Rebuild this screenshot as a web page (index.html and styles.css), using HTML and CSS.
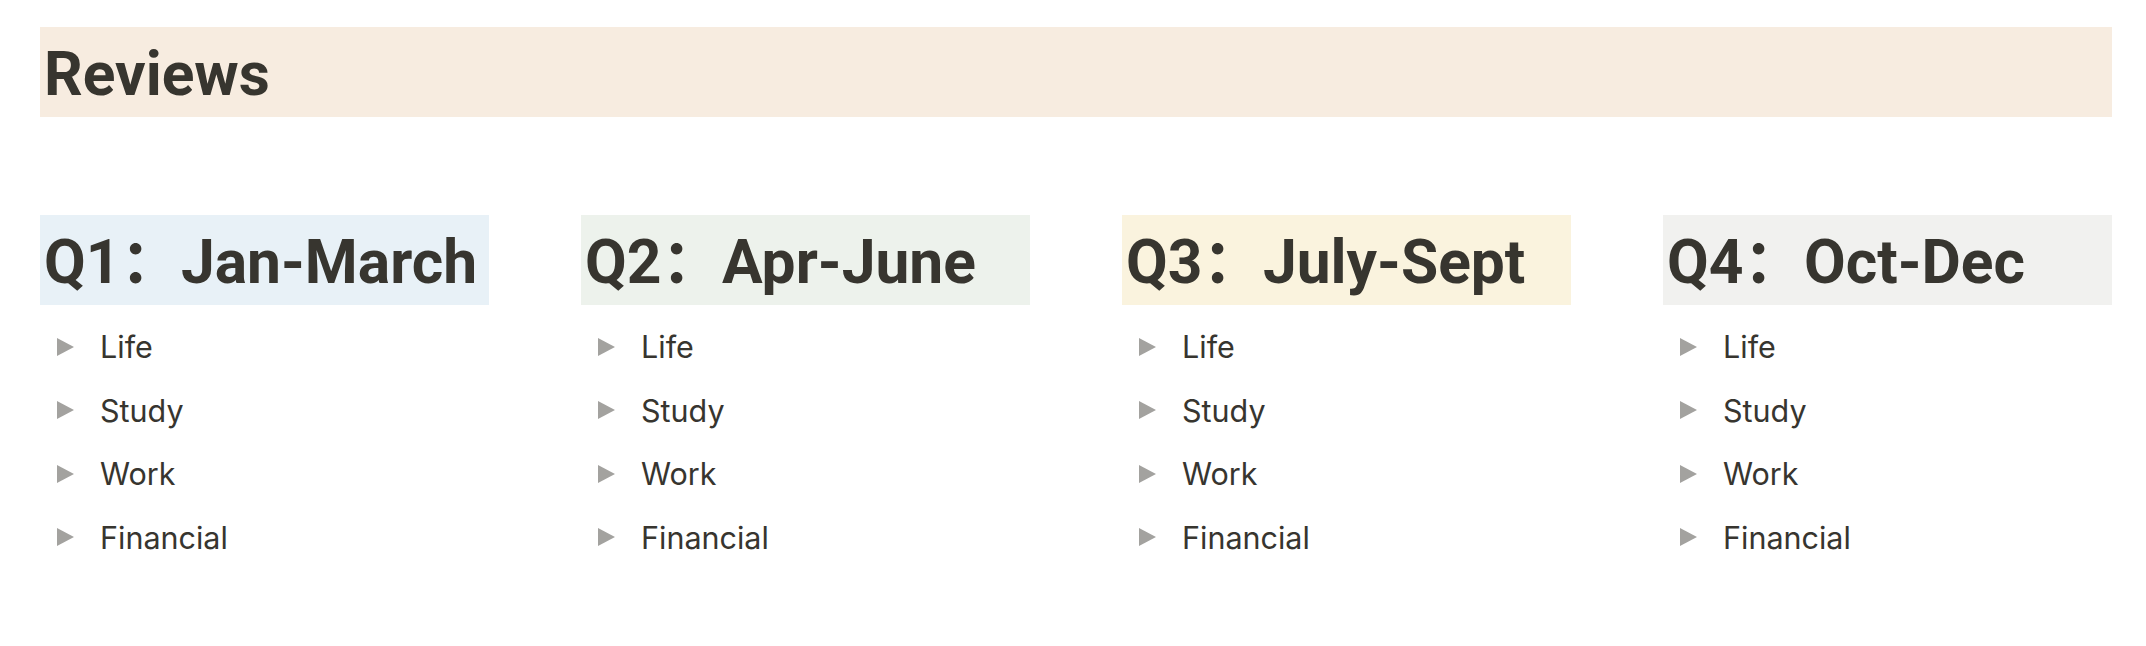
FILE: index.html
```html
<!DOCTYPE html>
<html lang="en">
<head>
<meta charset="utf-8">
<title>Reviews</title>
<link rel="stylesheet" href="styles.css">
</head>
<body>
<div class="page">
  <h1 class="title-bar">Reviews</h1>
  <div class="columns">
    <section class="col">
      <h2 class="quarter quarter-blue">Q1：Jan-March</h2>
      <ul class="toggles">
        <li class="toggle"><svg class="tri" viewBox="0 0 17 18"><polygon points="0,0 17,9 0,18"/></svg><span>Life</span></li>
        <li class="toggle"><svg class="tri" viewBox="0 0 17 18"><polygon points="0,0 17,9 0,18"/></svg><span>Study</span></li>
        <li class="toggle"><svg class="tri" viewBox="0 0 17 18"><polygon points="0,0 17,9 0,18"/></svg><span>Work</span></li>
        <li class="toggle"><svg class="tri" viewBox="0 0 17 18"><polygon points="0,0 17,9 0,18"/></svg><span>Financial</span></li>
      </ul>
    </section>
    <section class="col">
      <h2 class="quarter quarter-green">Q2：Apr-June</h2>
      <ul class="toggles">
        <li class="toggle"><svg class="tri" viewBox="0 0 17 18"><polygon points="0,0 17,9 0,18"/></svg><span>Life</span></li>
        <li class="toggle"><svg class="tri" viewBox="0 0 17 18"><polygon points="0,0 17,9 0,18"/></svg><span>Study</span></li>
        <li class="toggle"><svg class="tri" viewBox="0 0 17 18"><polygon points="0,0 17,9 0,18"/></svg><span>Work</span></li>
        <li class="toggle"><svg class="tri" viewBox="0 0 17 18"><polygon points="0,0 17,9 0,18"/></svg><span>Financial</span></li>
      </ul>
    </section>
    <section class="col">
      <h2 class="quarter quarter-yellow">Q3：July-Sept</h2>
      <ul class="toggles">
        <li class="toggle"><svg class="tri" viewBox="0 0 17 18"><polygon points="0,0 17,9 0,18"/></svg><span>Life</span></li>
        <li class="toggle"><svg class="tri" viewBox="0 0 17 18"><polygon points="0,0 17,9 0,18"/></svg><span>Study</span></li>
        <li class="toggle"><svg class="tri" viewBox="0 0 17 18"><polygon points="0,0 17,9 0,18"/></svg><span>Work</span></li>
        <li class="toggle"><svg class="tri" viewBox="0 0 17 18"><polygon points="0,0 17,9 0,18"/></svg><span>Financial</span></li>
      </ul>
    </section>
    <section class="col">
      <h2 class="quarter quarter-gray">Q4：Oct-Dec</h2>
      <ul class="toggles">
        <li class="toggle"><svg class="tri" viewBox="0 0 17 18"><polygon points="0,0 17,9 0,18"/></svg><span>Life</span></li>
        <li class="toggle"><svg class="tri" viewBox="0 0 17 18"><polygon points="0,0 17,9 0,18"/></svg><span>Study</span></li>
        <li class="toggle"><svg class="tri" viewBox="0 0 17 18"><polygon points="0,0 17,9 0,18"/></svg><span>Work</span></li>
        <li class="toggle"><svg class="tri" viewBox="0 0 17 18"><polygon points="0,0 17,9 0,18"/></svg><span>Financial</span></li>
      </ul>
    </section>
  </div>
</div>
</body>
</html>
```
FILE: styles.css
```css
html, body {
  margin: 0;
  padding: 0;
  background: #ffffff;
}

body {
  color: #37352f;
  font-family: Inter, "Noto Sans", sans-serif;
}

.page {
  padding: 27px 34px 0 40px;
}

.title-bar,
.quarter {
  margin: 0;
  height: 90px;
  box-sizing: border-box;
  padding: 6px 2px 0 4px;
  font-family: Roboto, "Noto Sans CJK SC", sans-serif;
  font-weight: 700;
  font-size: 60.5px;
  line-height: 84px;
  white-space: nowrap;
  color: #37352f;
}

.title-bar {
  background: #f7ece0;
}

.columns {
  display: grid;
  grid-template-columns: repeat(4, 1fr);
  column-gap: 92px;
  margin-top: 98px;
}

.quarter-blue { background: #e8f1f7; }
.quarter-green { background: #edf2ec; }
.quarter-yellow { background: #faf3de; }
.quarter-gray { background: #f1f1ef; }

.toggles {
  list-style: none;
  margin: 10px 0 0 0;
  padding: 0;
}

.toggle {
  display: flex;
  align-items: center;
  height: 63.5px;
  font-size: 30.5px;
  line-height: 63.5px;
  color: #37352f;
}

.tri {
  width: 17px;
  height: 18px;
  margin-left: 17px;
  margin-right: 26px;
  flex: none;
  fill: #a3a29f;
}
```
